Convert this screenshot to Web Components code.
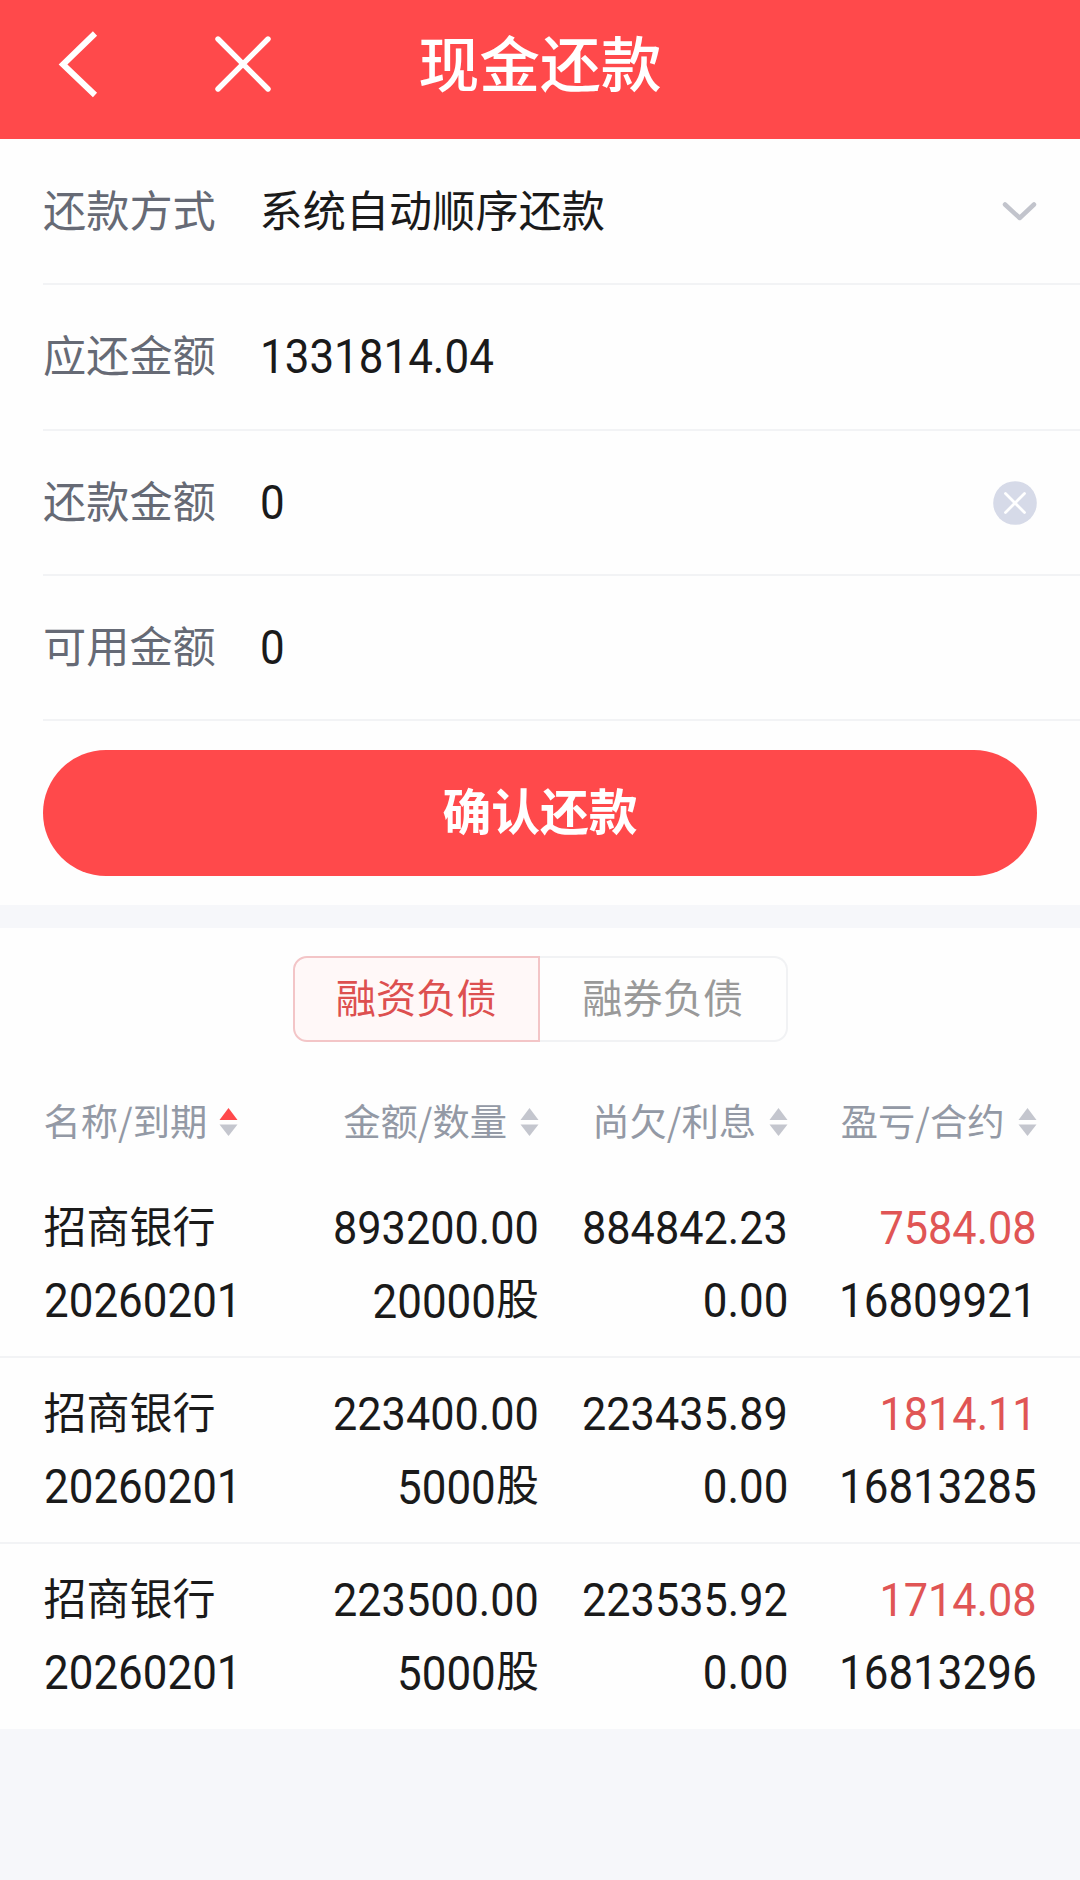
<!DOCTYPE html>
<html lang="zh-CN">
<head>
<meta charset="utf-8">
<title>现金还款</title>
<style>
html,body{margin:0;padding:0}
body{width:1080px;height:1880px;overflow:hidden;background:#f6f7fa;font-family:Roboto,"Noto Sans CJK SC",sans-serif;color:#1a1a1a}
</style>
</head>
<body>
<repay-page></repay-page>
<script>
const define = (name, html) => {
  const t = document.createElement('template');
  t.innerHTML = html;
  customElements.define(name, class extends HTMLElement {
    constructor() {
      super();
      this.attachShadow({ mode: 'open' }).appendChild(t.content.cloneNode(true));
    }
  });
};

define('nav-bar', `
<style>
:host{display:grid;grid-template-columns:1fr auto 1fr;height:139px;background:#ff494b;color:#fff;box-sizing:border-box;padding-bottom:11px;align-items:center}
.icons{display:flex;align-items:center;padding-left:54px;gap:107px}
svg{display:block}
h1{margin:0;padding-bottom:7px;font:500 60.8px/90px "Noto Sans CJK SC",sans-serif}
</style>
<div class="icons">
<svg width="50" height="70" viewBox="0 0 50 70" fill="none" stroke="#fff" stroke-width="6"><path d="M41 4.500L9 35.500L41 66"/></svg>
<svg width="64" height="64" viewBox="0 0 64 64" fill="none" stroke="#fff" stroke-width="5.400" stroke-linecap="round"><path d="M7 7L57 57M57 7L7 57"/></svg>
</div>
<h1><slot></slot></h1>`);

define('num-text', `
<style>
:host{display:inline-block;font-family:Roboto,sans-serif;font-size:48.4px;transform:translateY(var(--num-drop,2px)) scaleX(.908);transform-origin:var(--num-origin,100% 50%);white-space:nowrap}
:host([amount]){font-size:46.4px;transform:translateY(2px) scaleX(.932)}
</style><slot></slot>`);

define('form-row', `
<style>
:host{display:flex;align-items:center;height:145.3px;box-sizing:border-box;margin-left:43px;padding-right:43px;border-bottom:2px solid #f2f3f5;font:43.2px/64px "Noto Sans CJK SC",sans-serif;--num-origin:0 50%;--num-drop:4px}
.label{width:216.500px;color:#666a75;padding-bottom:7px}
.value{flex:1;display:flex;padding-bottom:7px}
</style>
<span class="label"><slot name="label"></slot></span><span class="value"><slot></slot></span><slot name="icon"></slot>`);

define('chevron-icon', `
<style>:host{display:block}svg{display:block}</style>
<svg width="36" height="24" viewBox="0 0 36 24" fill="none" stroke="#c2c4cc" stroke-width="4.500" stroke-linecap="round" stroke-linejoin="round"><path d="M4 4.500L18.700 18L33 4.500"/></svg>`);

define('clear-icon', `
<style>:host{display:block;padding-top:2px}svg{display:block}</style>
<svg width="44" height="44" viewBox="0 0 44 44"><circle cx="22" cy="22" r="21.800" fill="#d6dae8"/><path d="M12.500 12.500L31.500 31.500M31.500 12.500L12.500 31.500" stroke="#fff" stroke-width="2.800" stroke-linecap="round"/></svg>`);

define('confirm-button', `
<style>
:host{display:block;padding:28.500px 43px 29.300px}
button{display:flex;width:100%;height:126px;border:0;border-radius:63px;background:#ff494b;color:#fff;align-items:center;justify-content:center;padding:0 0 7px;font:700 48.8px/70px "Noto Sans CJK SC",sans-serif}
</style><button><slot></slot></button>`);

define('seg-tab', `
<style>
:host{display:flex;width:247.500px;height:86px;box-sizing:border-box;align-items:center;justify-content:center;padding-bottom:6px;border:2px solid #f1f2f4;border-left:0;border-radius:0 14px 14px 0;font:40.2px/60px "Noto Sans CJK SC",sans-serif;color:#999}
:host([active]){border:2px solid #f3c5c7;border-radius:14px 0 0 14px;background:#fff8f8;color:#dd5050}
</style><slot></slot>`);

define('sort-head', `
<style>
:host{display:flex;align-items:center;gap:13px;font:37.3px/56px "Noto Sans CJK SC",sans-serif;color:#9399a5;--up:#c4c6ce;white-space:nowrap}
:host([asc]){--up:#ff494b;gap:12px}
span{padding-bottom:3px}
svg{display:block;margin-top:1px}
</style><span><slot></slot></span>
<svg width="19" height="30" viewBox="0 0 19 30"><path d="M9.500 1L18.500 13H.5Z" fill="var(--up)"/><path d="M9.500 29L.5 17.500H18.500Z" fill="#c4c6ce"/></svg>`);

define('debt-row', `
<style>
:host{display:grid;grid-template-columns:246px 249.500px 249px 1fr;grid-template-rows:73px 73px;height:186px;box-sizing:border-box;padding:17px 43.500px 0;border-bottom:2px solid #f2f3f5;align-items:center;font:43px/64px "Noto Sans CJK SC",sans-serif}
:host([last]){height:185px;border:0}
slot{display:flex;justify-content:flex-end;align-items:center}
slot[name=name],slot[name=date]{justify-content:flex-start;--num-origin:0 50%}
slot[name=name]{padding-bottom:3px}
slot[name=qty]{padding-bottom:2px;--num-drop:3px}
slot[name=profit]{color:#e05555}
</style>
<slot name="name"></slot><slot name="amount"></slot><slot name="owed"></slot><slot name="profit"></slot>
<slot name="date"></slot><slot name="qty"></slot><slot name="interest"></slot><slot name="contract"></slot>`);

const rows = [
  ['893200.00', '884842.23', '7584.08', '20000', '16809921'],
  ['223400.00', '223435.89', '1814.11', '5000', '16813285'],
  ['223500.00', '223535.92', '1714.08', '5000', '16813296']
].map(([a, o, p, q, c], i) => `<debt-row${i === 2 ? ' last' : ''}>
<span slot="name">招商银行</span><num-text amount slot="amount">${a}</num-text><num-text amount slot="owed">${o}</num-text><num-text amount slot="profit">${p}</num-text>
<num-text slot="date">20260201</num-text><span slot="qty"><num-text>${q}</num-text>股</span><num-text slot="interest">0.00</num-text><num-text slot="contract">${c}</num-text>
</debt-row>`).join('');

define('repay-page', `
<style>
:host{display:flex;flex-direction:column;width:1080px}
section{background:#fefefe}
.form{padding-top:1px}
.debts{margin-top:23px}
.tabs{display:flex;justify-content:center;padding-top:28.500px}
.heads{display:grid;grid-template-columns:246px 249.500px 249px 1fr;padding:50px 43.500px 21px;justify-items:end}
.heads :first-child{justify-self:start}
</style>
<nav-bar>现金还款</nav-bar>
<section class="form">
<form-row><span slot="label">还款方式</span>系统自动顺序还款<chevron-icon slot="icon"></chevron-icon></form-row>
<form-row><span slot="label">应还金额</span><num-text>1331814.04</num-text></form-row>
<form-row><span slot="label">还款金额</span><num-text>0</num-text><clear-icon slot="icon"></clear-icon></form-row>
<form-row><span slot="label">可用金额</span><num-text>0</num-text></form-row>
<confirm-button>确认还款</confirm-button>
</section>
<section class="debts">
<div class="tabs"><seg-tab active>融资负债</seg-tab><seg-tab>融券负债</seg-tab></div>
<div class="heads"><sort-head asc>名称/到期</sort-head><sort-head>金额/数量</sort-head><sort-head>尚欠/利息</sort-head><sort-head>盈亏/合约</sort-head></div>
${rows}
</section>`);
</script>
</body>
</html>
